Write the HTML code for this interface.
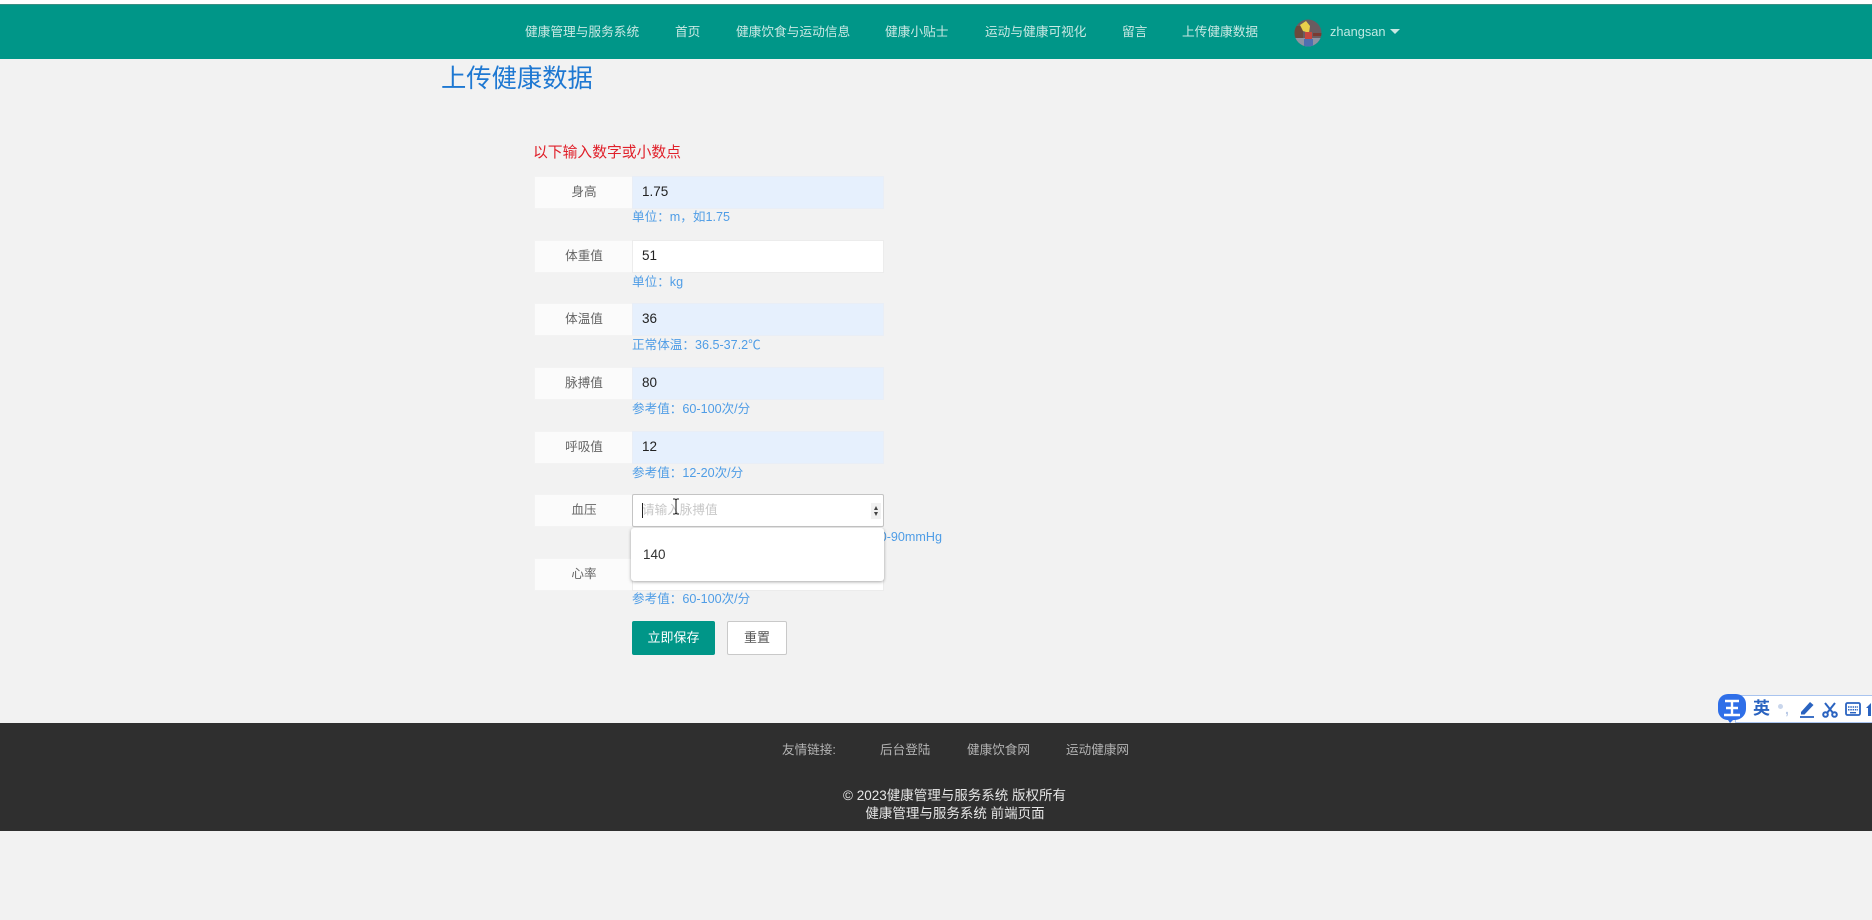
<!DOCTYPE html>
<html lang="zh-CN">
<head>
<meta charset="utf-8">
<title>上传健康数据</title>
<style>
html,body{margin:0;padding:0;width:1872px;height:920px;overflow:hidden;background:#f2f2f2;}
body{position:relative;font-family:"Liberation Sans","Noto Sans CJK SC",sans-serif;}
.a{position:absolute;white-space:nowrap;}
.t{position:absolute;white-space:nowrap;line-height:20px;height:20px;}
#top{position:absolute;left:0;top:0;width:1872px;height:4px;background:#fff;}
#nav{position:absolute;left:0;top:4px;width:1872px;height:55px;background:#009688;border-top:1px solid #3b8f83;box-sizing:border-box;}
.n{font-size:12.7px;color:#c9e8e3;top:22px;}
.lab{position:absolute;left:534px;width:99px;height:33px;box-sizing:border-box;background:#fbfbfb;border:1px solid #f3f3f3;border-right:0;color:#666;font-size:12.6px;line-height:30px;text-align:center;}
.inp{position:absolute;left:632px;width:252px;height:33px;box-sizing:border-box;font-size:13.5px;line-height:30px;padding-left:9px;color:#222;border:1px solid #ececec;}
.blue{background:#e6f0fd;border-color:#e9eef6;}
.white{background:#fff;}
.help{position:absolute;left:632px;font-size:12.6px;line-height:18px;height:18px;color:#4f9de6;white-space:nowrap;}
.f{font-size:12.6px;color:#b4b4b4;top:740px;}
.c{font-size:13.5px;color:#e6e6e6;text-align:center;left:0;width:1904px;}
</style>
</head>
<body>
<div id="top"></div>
<div id="nav"></div>
<div class="t n" style="left:525px">健康管理与服务系统</div>
<div class="t n" style="left:675px">首页</div>
<div class="t n" style="left:736px">健康饮食与运动信息</div>
<div class="t n" style="left:885px">健康小贴士</div>
<div class="t n" style="left:985px">运动与健康可视化</div>
<div class="t n" style="left:1122px">留言</div>
<div class="t n" style="left:1182px">上传健康数据</div>
<svg class="a" style="left:1294px;top:19px" width="28" height="28" viewBox="0 0 28 28">
<defs><clipPath id="av"><circle cx="14" cy="14" r="13.5"/></clipPath></defs>
<g clip-path="url(#av)">
<rect width="28" height="28" fill="#6a5c60"/>
<rect y="19" width="28" height="9" fill="#8f93a3"/>
<path d="M0 7h9v12H0z" fill="#6b4a3c"/>
<path d="M6 6l6-4 4 5-1 7-6-2z" fill="#e8cf4a"/>
<path d="M11 13h7v8h-7z" fill="#c8473f"/>
<path d="M10 20h9v8h-9z" fill="#4f6fb0"/>
<path d="M19 14h9v3h-9z" fill="#7a3a32"/>
</g></svg>
<div class="t n" style="left:1330px;font-size:12.8px;color:#bfeae3">zhangsan</div>
<div class="a" style="left:1390px;top:29px;width:0;height:0;border-left:5px solid transparent;border-right:5px solid transparent;border-top:5px solid #c9e8e3"></div>

<div class="a" style="left:441px;top:61px;font-size:25.3px;line-height:36px;color:#1e78d2">上传健康数据</div>
<div class="a" style="left:533px;top:142px;font-size:14.8px;line-height:22px;color:#e0202a">以下输入数字或小数点</div>

<div class="lab" style="top:176px">身高</div><div class="inp blue" style="top:176px">1.75</div>
<div class="help" style="top:208px">单位&#xFF1A;m&#xFF0C;如1.75</div>

<div class="lab" style="top:240px">体重值</div><div class="inp white" style="top:240px">51</div>
<div class="help" style="top:273px">单位&#xFF1A;kg</div>

<div class="lab" style="top:303px">体温值</div><div class="inp blue" style="top:303px">36</div>
<div class="help" style="top:336px">正常体温&#xFF1A;36.5-37.2℃</div>

<div class="lab" style="top:367px">脉搏值</div><div class="inp blue" style="top:367px">80</div>
<div class="help" style="top:400px">参考值&#xFF1A;60-100次/分</div>

<div class="lab" style="top:431px">呼吸值</div><div class="inp blue" style="top:431px">12</div>
<div class="help" style="top:464px">参考值&#xFF1A;12-20次/分</div>

<div class="lab" style="top:494px">血压</div>
<div class="inp white" style="top:494px;border-color:#c4c4c4;border-radius:2px;color:#c8c8c8;font-size:12.6px;">请输入脉搏值</div>
<div class="a" style="left:642px;top:503px;width:1px;height:15px;background:#222"></div>
<div class="a" style="left:871px;top:503px;width:10px;height:16px;background:#f1f1f1"></div>
<div class="a" style="left:874px;top:506px;width:0;height:0;border-left:2.5px solid transparent;border-right:2.5px solid transparent;border-bottom:4px solid #444"></div>
<div class="a" style="left:874px;top:512px;width:0;height:0;border-left:2.5px solid transparent;border-right:2.5px solid transparent;border-top:4px solid #444"></div>
<svg class="a" style="left:671px;top:498px" width="10" height="17" viewBox="0 0 10 17"><path d="M2 1h2l1 1 1-1h2M5 2v13M2 16h2l1-1 1 1h2" fill="none" stroke="#222" stroke-width="1.1"/></svg>
<div class="help" style="top:528px;left:auto;right:930px">血压&#xFF1A;90-140/60-90mmHg</div>

<div class="lab" style="top:558px">心率</div><div class="inp white" style="top:558px"></div>
<div class="help" style="top:590px">参考值&#xFF1A;60-100次/分</div>

<div class="a" style="left:631px;top:528px;width:253px;height:53px;background:#fff;border-radius:3px;box-shadow:0 1px 3px rgba(0,0,0,.35)"></div>
<div class="a" style="left:643px;top:545px;font-size:13.5px;line-height:20px;color:#333">140</div>

<div class="a" style="left:632px;top:621px;width:83px;height:34px;background:#009688;border-radius:2px;color:#fff;font-size:13px;line-height:33px;text-align:center">立即保存</div>
<div class="a" style="left:727px;top:621px;width:60px;height:34px;box-sizing:border-box;background:#fff;border:1px solid #c9c9c9;border-radius:2px;color:#555;font-size:13px;line-height:31px;text-align:center">重置</div>

<div class="a" style="left:0;top:723px;width:1872px;height:108px;background:#2f2f2f"></div>
<div class="t f" style="left:782px">友情链接:</div>
<div class="t f" style="left:880px">后台登陆</div>
<div class="t f" style="left:967px">健康饮食网</div>
<div class="t f" style="left:1066px">运动健康网</div>
<div class="t c" style="top:786px;left:0;width:1909px">© 2023健康管理与服务系统 版权所有</div>
<div class="t c" style="top:804px;left:0;width:1910px">健康管理与服务系统 前端页面</div>

<!-- IME toolbar -->
<div class="a" style="left:1735px;top:695px;width:140px;height:28px;box-sizing:border-box;background:#fff;border:1px solid #a9c4ef"></div>
<svg class="a" style="left:1717px;top:693px" width="30" height="32" viewBox="0 0 30 32">
<path d="M11 1h8a10 10 0 0 1 10 10v5a11 11 0 0 1-11 11h-2l-3 3-2-3h-1A10 10 0 0 1 1 17v-6A10 10 0 0 1 11 1z" fill="#2f6fe8"/>
<path d="M8 8h14M15 8v14M9 15h12M7 22h16" stroke="#fff" stroke-width="2.4" fill="none"/>
</svg>
<div class="a" style="left:1753px;top:699px;font-size:17px;line-height:20px;font-weight:700;color:#2a63c0">英</div>
<div class="a" style="left:1778px;top:704px;width:5px;height:5px;border-radius:50%;background:#c9d6ec"></div>
<div class="a" style="left:1785px;top:699px;font-size:14px;line-height:20px;font-weight:700;color:#b9c9e6">,</div>
<svg class="a" style="left:1799px;top:702px" width="16" height="16" viewBox="0 0 16 16"><path d="M2 11L11 1l3.500 3-9 9.500H2z" fill="#2a63c0" transform="translate(0 -1)"/><path d="M1 15h14" stroke="#2a63c0" stroke-width="1.800"/></svg>
<svg class="a" style="left:1822px;top:702px" width="16" height="16" viewBox="0 0 16 16" fill="none" stroke="#2a63c0" stroke-width="2"><circle cx="3.500" cy="12.500" r="2.300"/><circle cx="12.500" cy="12.500" r="2.300"/><path d="M5 11L13 1M11 11L3 1"/></svg>
<svg class="a" style="left:1845px;top:702px" width="16" height="14" viewBox="0 0 16 14"><rect x="1" y="1" width="14" height="12" rx="1.500" fill="none" stroke="#2a63c0" stroke-width="1.800"/><path d="M3 5h10M3 7.800h10" stroke="#2a63c0" stroke-width="1.500" stroke-dasharray="1.500 .8"/><path d="M5 10.700h6" stroke="#2a63c0" stroke-width="1.400"/></svg>
<svg class="a" style="left:1866px;top:702px" width="6" height="15" viewBox="0 0 6 15"><path d="M5 1L0 6h2v8h3z" fill="#2a63c0"/></svg>
</body>
</html>
